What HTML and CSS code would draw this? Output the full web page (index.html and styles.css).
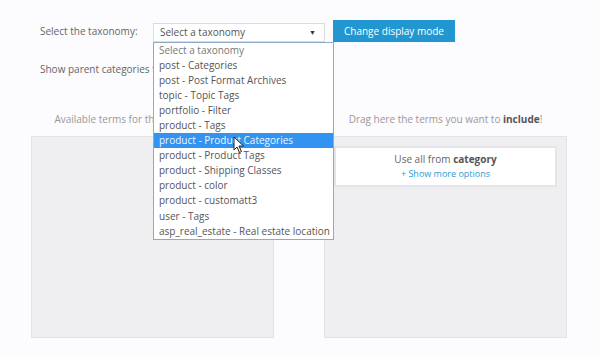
FILE: index.html
```html
<!DOCTYPE html>
<html lang="en">
<head>
  <meta charset="UTF-8">
  <meta name="viewport" content="width=device-width, initial-scale=1.0">
  <title>Taxonomy terms</title>
  <link rel="stylesheet" href="styles.css">
</head>
<body>
  <div class="page">
    <!-- Taxonomy picker -->
    <div class="row">
      <label class="label">Select the taxonomy:</label>
      <div class="select-wrap">
        <div class="select">
          <span>Select a taxonomy</span>
          <span class="arrow">&#9660;</span>
        </div>
        <ul class="dropdown">
          <li>Select a taxonomy</li>
          <li>post - Categories</li>
          <li>post - Post Format Archives</li>
          <li>topic - Topic Tags</li>
          <li>portfolio - Filter</li>
          <li>product - Tags</li>
          <li class="active">product - Product Categories</li>
          <li>product - Product Tags</li>
          <li>product - Shipping Classes</li>
          <li>product - color</li>
          <li>product - customatt3</li>
          <li>user - Tags</li>
          <li>asp_real_estate - Real estate location</li>
        </ul>
        <svg class="cursor" width="12" height="18" viewBox="0 0 12 18">
          <path d="M1 1 L1 14 L4 11 L6.5 16.5 L8.5 15.5 L6 10 L10.5 10 Z" fill="#fff" stroke="#222" stroke-width="1"/>
        </svg>
      </div>
      <button class="btn">Change display mode</button>
    </div>

    <div class="row-text">Show parent categories too</div>

    <!-- Term columns -->
    <div class="columns">
      <div class="col">
        <p class="col-title">Available terms for the selected taxonomy</p>
        <div class="box"></div>
      </div>
      <div class="col">
        <p class="col-title">Drag here the terms you want to <b>include</b>!</p>
        <div class="box">
          <div class="card">
            <p>Use all from <b>category</b></p>
            <a href="#">+ Show more options</a>
          </div>
        </div>
      </div>
    </div>
  </div>
</body>
</html>
```

FILE: styles.css
```css
* {
  margin: 0;
  padding: 0;
  box-sizing: border-box;
}

body {
  background: #fcfbfd;
  font-family: 'Open Sans', sans-serif;
  font-size: 10px;
  color: #666;
}

.page {
  padding: 20px 0 0;
}

.row {
  display: flex;
  align-items: center;
  height: 22px;
  padding-left: 40px;
}

.label {
  width: 113px;
  color: #666;
}

.select-wrap {
  position: relative;
  width: 172px;
}

.select {
  display: flex;
  justify-content: space-between;
  align-items: center;
  height: 19px;
  margin-top: 2px;
  padding: 0 8px 0 6px;
  background: #fff;
  border: 1px solid #dcdcdc;
  color: #555;
}

.arrow {
  font-size: 7px;
  color: #333;
}

.dropdown {
  position: absolute;
  top: 21px;
  left: 0;
  width: 181px;
  list-style: none;
  background: #fff;
  border: 1px solid #8fa9c6;
  z-index: 5;
}

.dropdown li {
  height: 15.1px;
  line-height: 15.5px;
  padding-left: 5px;
  color: #555;
  white-space: nowrap;
}

.dropdown li:first-child {
  color: #777;
}

.dropdown li.active {
  background: #3393f0;
  color: #eef6ff;
}

.cursor {
  position: absolute;
  top: 115px;
  left: 80px;
  z-index: 6;
}

.btn {
  margin-left: 8px;
  height: 22px;
  width: 122px;
  border: none;
  background: #2196d0;
  color: #fff;
  font-family: 'Open Sans', sans-serif;
  font-size: 10px;
}

.row-text {
  margin-top: 20px;
  padding-left: 40px;
  line-height: 15px;
}

.columns {
  display: grid;
  grid-template-columns: 243px 243px;
  gap: 50px;
  margin-top: 35px;
  padding-left: 31px;
}

.col-title {
  text-align: center;
  line-height: 15px;
  color: #999;
  white-space: nowrap;
  overflow: hidden;
  margin-bottom: 9px;
}

.col-title b {
  color: #555;
}

.box {
  height: 202px;
  background: #efeef0;
  border: 1px solid #e3e2e5;
  padding: 9px;
}

.card {
  height: 41px;
  background: #fff;
  border: 2px solid #e5e4e7;
  text-align: center;
  padding-top: 4px;
}

.card p {
  line-height: 15px;
  color: #666;
}

.card b {
  color: #555;
}

.card a {
  display: block;
  line-height: 14px;
  font-size: 9px;
  color: #2a9bd4;
  text-decoration: none;
}
```
